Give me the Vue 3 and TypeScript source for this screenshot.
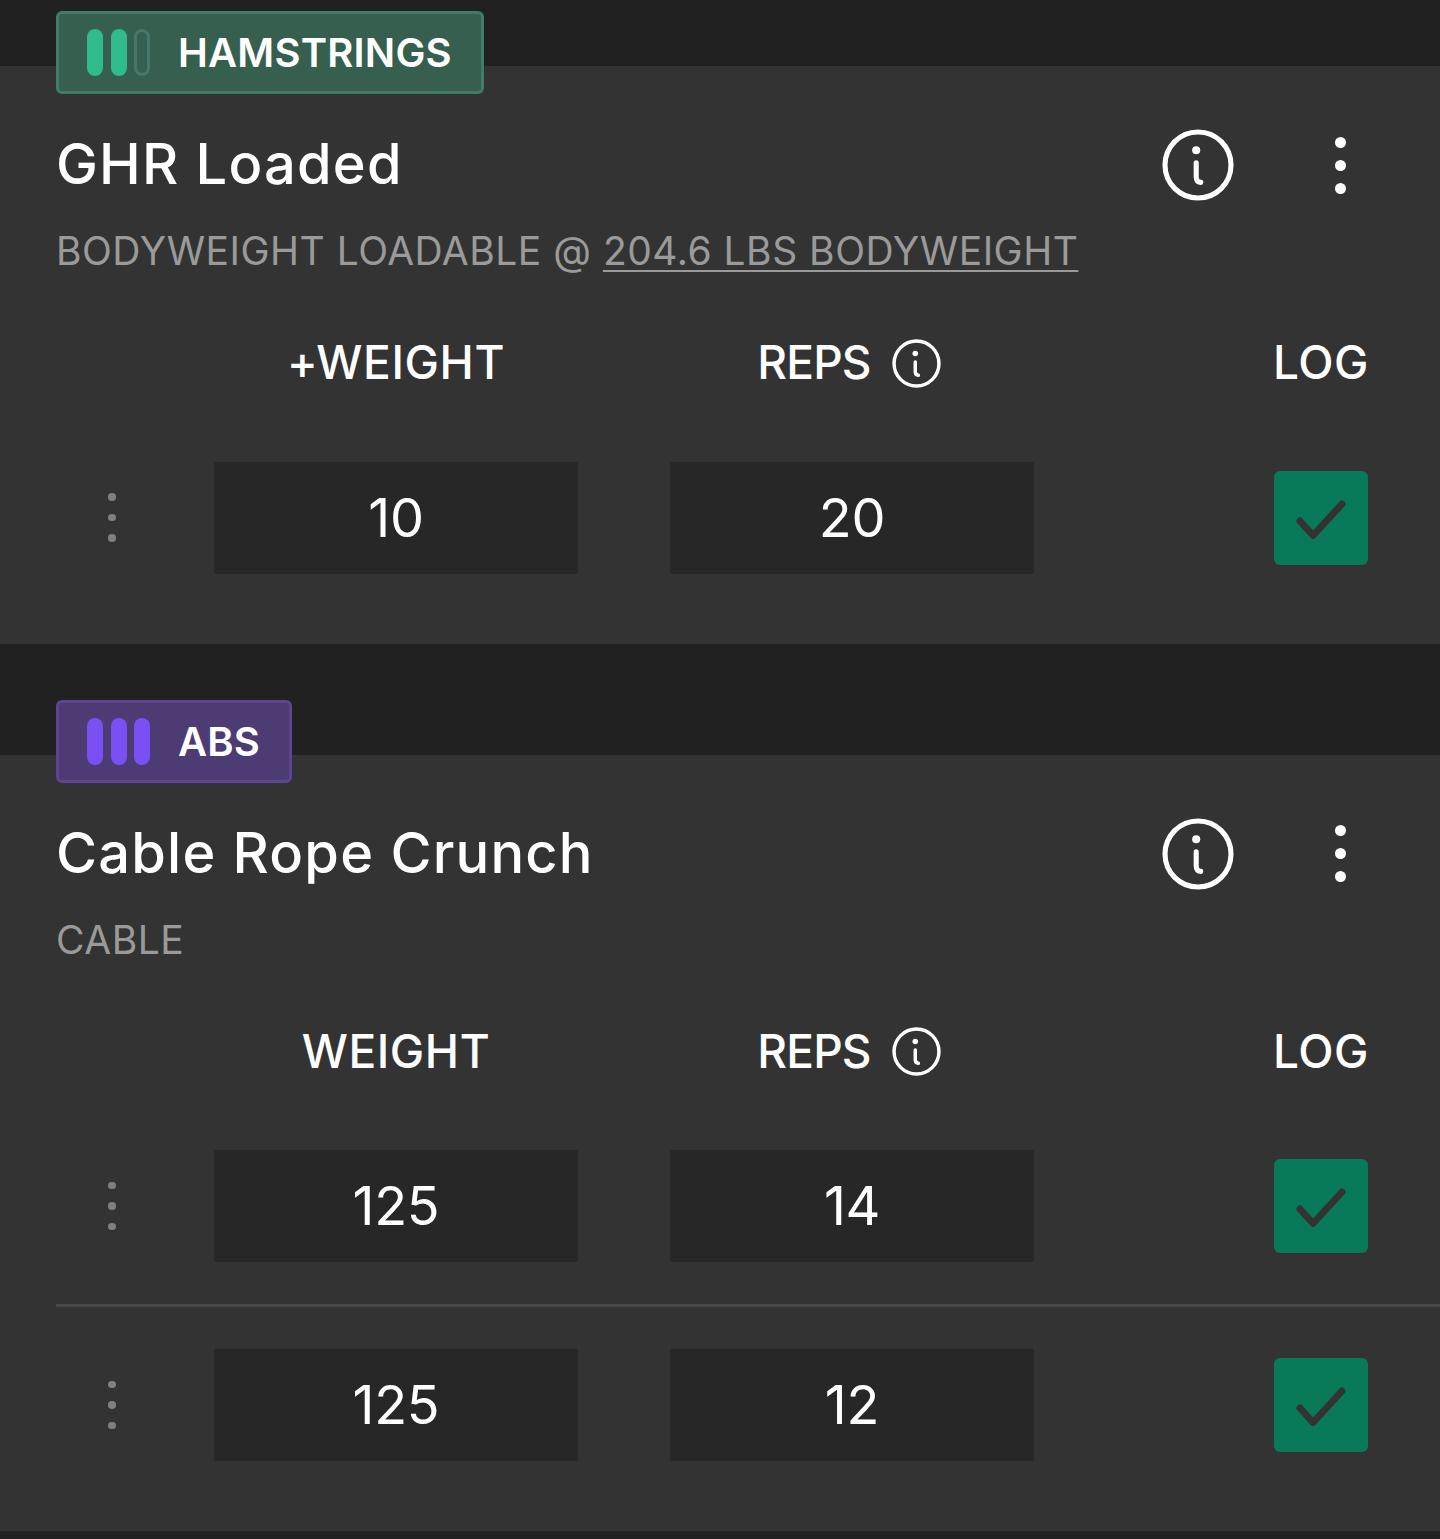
<script setup lang="ts">
interface WorkoutSet {
  weight: string;
  reps: string;
}

interface Exercise {
  muscle: string;
  tone: 'green' | 'purple';
  volume: number;
  name: string;
  kind: string;
  bodyweight?: string;
  weightLabel: string;
  sets: WorkoutSet[];
}

const exercises: Exercise[] = [
  {
    muscle: 'HAMSTRINGS',
    tone: 'green',
    volume: 2,
    name: 'GHR Loaded',
    kind: 'BODYWEIGHT LOADABLE @ ',
    bodyweight: '204.6 LBS BODYWEIGHT',
    weightLabel: '+WEIGHT',
    sets: [{ weight: '10', reps: '20' }],
  },
  {
    muscle: 'ABS',
    tone: 'purple',
    volume: 3,
    name: 'Cable Rope Crunch',
    kind: 'CABLE',
    weightLabel: 'WEIGHT',
    sets: [
      { weight: '125', reps: '14' },
      { weight: '125', reps: '12' },
    ],
  },
];
</script>

<template>
  <div class="page">
    <section v-for="item in exercises" :key="item.name" class="exercise">
      <div class="badge" :class="item.tone">
        <div class="bars">
          <span v-for="n in 3" :key="n" class="bar" :class="{ empty: n > item.volume }"></span>
        </div>
        <span class="muscle">{{ item.muscle }}</span>
      </div>

      <div class="card">
        <div class="title-row">
          <h2 class="name">{{ item.name }}</h2>
          <svg class="info-big" viewBox="0 0 24 24" fill="none" stroke="#fff" stroke-width="1.7" stroke-linecap="round">
            <circle cx="12" cy="12" r="11" />
            <path d="M11.4 11.3V15.9C11.4 17 12 17.7 12.9 17.8" />
            <circle cx="11.4" cy="7.1" r="1.35" fill="#fff" stroke="none" />
          </svg>
          <div class="kebab"><i></i><i></i><i></i></div>
        </div>
        <p class="kind">{{ item.kind }}<u v-if="item.bodyweight">{{ item.bodyweight }}</u></p>

        <div class="row head">
          <div class="col-drag"></div>
          <div class="col-val">{{ item.weightLabel }}</div>
          <div class="col-val reps-head">
            REPS
            <svg class="info-small" viewBox="0 0 24 24" fill="none" stroke="#fff" stroke-width="1.7" stroke-linecap="round">
              <circle cx="12" cy="12" r="11" />
              <path d="M11.4 11.3V15.9C11.4 17 12 17.7 12.9 17.8" />
              <circle cx="11.4" cy="7.1" r="1.35" fill="#fff" stroke="none" />
            </svg>
          </div>
          <div class="col-log">LOG</div>
        </div>

        <div class="sets">
          <div v-for="(set, i) in item.sets" :key="i" class="row set">
            <div class="col-drag">
              <div class="kebab small"><i></i><i></i><i></i></div>
            </div>
            <div class="col-val field">{{ set.weight }}</div>
            <div class="col-val field">{{ set.reps }}</div>
            <div class="col-log">
              <div class="check">
                <svg viewBox="0 0 94 94" fill="none" stroke="#333" stroke-width="7" stroke-linecap="round" stroke-linejoin="round">
                  <path d="M26 50L39 64.500L68 33" />
                </svg>
              </div>
            </div>
          </div>
        </div>
      </div>
    </section>
  </div>
</template>

<style scoped>
.page {
  width: 1440px;
  height: 1539px;
  overflow: hidden;
  background: #212121;
  color: #fff;
  font-family: Inter, "Open Sans", sans-serif;
}

.exercise {
  padding-top: 56px;
}

.exercise:first-child {
  padding-top: 11px;
}

.badge {
  position: relative;
  z-index: 1;
  display: flex;
  align-items: center;
  width: fit-content;
  height: 83px;
  box-sizing: border-box;
  margin: 0 0 -28px 56px;
  padding: 0 29px 0 28px;
  border: 3px solid;
  border-radius: 6px;
}

.badge.green {
  background: #365f50;
  border-color: #3f7d66;
  --bar: #2fbb8c;
  --bar-empty: #47776a;
}

.badge.purple {
  background: #4d3b73;
  border-color: #5c4592;
  --bar: #7a50f5;
  --bar-empty: #5c4592;
}

.bars {
  display: flex;
  gap: 7.5px;
  margin-right: 28px;
}

.bar {
  width: 16px;
  height: 47px;
  box-sizing: border-box;
  border-radius: 8px;
  background: var(--bar);
}

.bar.empty {
  background: none;
  border: 3px solid var(--bar-empty);
}

.muscle {
  font-size: 40px;
  font-weight: 600;
  letter-spacing: 0.2px;
}

.card {
  background: #333;
  padding-top: 56px;
  padding-bottom: 70px;
}

.title-row {
  display: flex;
  align-items: center;
  height: 84px;
  padding: 0 94px 0 56px;
}

.name {
  flex: 1;
  margin: 0;
  font-size: 56px;
  font-weight: 500;
  letter-spacing: 1.2px;
}

.info-big {
  width: 72px;
  height: 72px;
  margin-top: 2px;
  margin-right: 101px;
}

.kebab {
  display: flex;
  flex-direction: column;
  gap: 12px;
  margin-top: 2px;
}

.kebab i {
  display: block;
  width: 11px;
  height: 11px;
  border-radius: 50%;
  background: #fff;
}

.kebab.small {
  gap: 13px;
  align-items: center;
  margin-top: 0;
}

.kebab.small i {
  width: 7.5px;
  height: 7.5px;
  background: #808080;
}

.kind {
  margin: 21px 0 0 56px;
  height: 48px;
  font-size: 39px;
  line-height: 48px;
  letter-spacing: 0.5px;
  color: #9a9a9a;
}

.kind u {
  text-underline-offset: 5px;
  text-decoration-thickness: 2px;
}

.row {
  display: flex;
  align-items: center;
}

.head {
  height: 60px;
  margin-top: 57px;
  padding-left: 56px;
  font-size: 46px;
  font-weight: 500;
  letter-spacing: 0.6px;
}

.col-drag {
  width: 158px;
  padding-right: 46px;
  box-sizing: border-box;
  display: flex;
  justify-content: center;
}

.col-val {
  width: 364px;
  text-align: center;
}

.col-val + .col-val {
  margin-left: 92px;
}

.reps-head {
  display: flex;
  align-items: center;
  justify-content: center;
  gap: 21px;
  padding-right: 6px;
  box-sizing: border-box;
  letter-spacing: -0.8px;
}

.info-small {
  width: 49px;
  height: 49px;
  margin-top: 2px;
}

.col-log {
  width: 94px;
  margin-left: auto;
  margin-right: 72px;
  display: flex;
  justify-content: center;
}

.sets {
  margin: 69.6px 0 0 56px;
}

.set {
  padding: 42px 0;
}

.set:first-child {
  padding-top: 0;
}

.set:last-child {
  padding-bottom: 0;
}

.set + .set {
  border-top: 3px solid #484848;
}

.field {
  height: 112px;
  line-height: 112px;
  background: #272727;
  font-size: 54px;
  letter-spacing: -0.3px;
  font-weight: 400;
}

.check {
  width: 94px;
  height: 94px;
  border-radius: 6px;
  background: #087a5a;
}

.check svg {
  display: block;
  width: 94px;
  height: 94px;
}
</style>
